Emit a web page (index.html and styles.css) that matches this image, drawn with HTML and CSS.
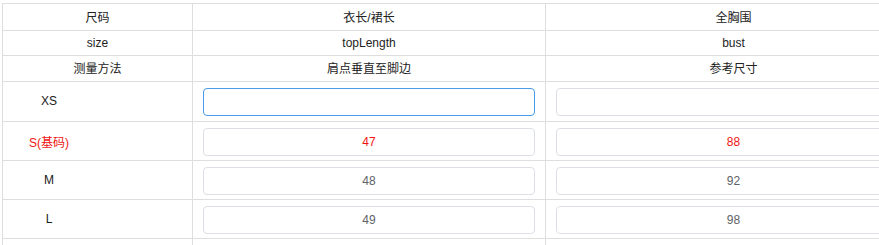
FILE: index.html
```html
<!DOCTYPE html>
<html lang="zh-CN">
<head>
  <meta charset="UTF-8">
  <title>尺码表</title>
  <link rel="stylesheet" href="styles.css">
</head>
<body>

  <div class="size-wrap">
    <table class="size-table">
      <colgroup>
        <col class="col-size">
        <col class="col-length">
        <col class="col-bust">
      </colgroup>
      <thead>
        <tr class="head-title">
          <th>尺码</th>
          <th>衣长/裙长</th>
          <th>全胸围</th>
        </tr>
        <tr class="head-key">
          <th>size</th>
          <th>topLength</th>
          <th>bust</th>
        </tr>
        <tr class="head-method">
          <th>测量方法</th>
          <th>肩点垂直至脚边</th>
          <th>参考尺寸</th>
        </tr>
      </thead>
      <tbody>
        <tr>
          <td><span class="size-name">XS</span></td>
          <td><input class="size-input is-focus" type="text" value=""></td>
          <td><input class="size-input" type="text" value=""></td>
        </tr>
        <tr class="base-row">
          <td><span class="size-name">S(基码)</span></td>
          <td><input class="size-input" type="text" value="47"></td>
          <td><input class="size-input" type="text" value="88"></td>
        </tr>
        <tr>
          <td><span class="size-name">M</span></td>
          <td><input class="size-input" type="text" value="48"></td>
          <td><input class="size-input" type="text" value="92"></td>
        </tr>
        <tr>
          <td><span class="size-name">L</span></td>
          <td><input class="size-input" type="text" value="49"></td>
          <td><input class="size-input" type="text" value="98"></td>
        </tr>
        <tr>
          <td><span class="size-name"></span></td>
          <td><input class="size-input" type="text" value=""></td>
          <td><input class="size-input" type="text" value=""></td>
        </tr>
      </tbody>
    </table>
  </div>

</body>
</html>
```

FILE: styles.css
```css
body {
  margin: 0;
  font-family: "Liberation Sans", Arial, "Noto Sans CJK SC", sans-serif;
  font-size: 12px;
  color: #222;
  background-color: #fff;
}

.size-wrap {
  padding: 3px 0 0 2px;
  overflow: hidden;
  height: 242px;
}

.size-table {
  border-collapse: collapse;
  table-layout: fixed;
  width: 920px;
}

.col-size {
  width: 190px;
}

.col-length {
  width: 353px;
}

.size-table th,
.size-table td {
  border: 1px solid #dedede;
  text-align: center;
  font-weight: normal;
}

.size-table th {
  padding: 0 10px;
  line-height: 14px;
}

.head-title th {
  height: 24px;
  padding-top: 2px;
}

.head-key th {
  height: 24px;
}

.head-method th {
  height: 25px;
}

.size-table td {
  padding: 6px 10px 4px;
  height: 28px;
  vertical-align: top;
}

.size-table tbody tr:first-child td {
  padding-bottom: 5px;
}

.size-table td:first-child {
  padding: 0;
  text-align: left;
  vertical-align: middle;
}

.size-table tbody tr:first-child td:first-child {
  padding-top: 3px;
}

.size-name {
  display: inline-block;
  width: 92px;
  text-align: center;
  color: #1a1a1a;
}

.size-input {
  box-sizing: border-box;
  display: block;
  width: 100%;
  height: 28px;
  padding: 0 8px;
  border: 1px solid #dcdfe6;
  border-radius: 4px;
  background-color: #fff;
  font-family: inherit;
  font-size: 12px;
  color: #606266;
  text-align: center;
  outline: none;
}

.size-input.is-focus {
  border-color: #4a9be8;
}

.base-row .size-name,
.base-row .size-input {
  color: #f01414;
}
```
